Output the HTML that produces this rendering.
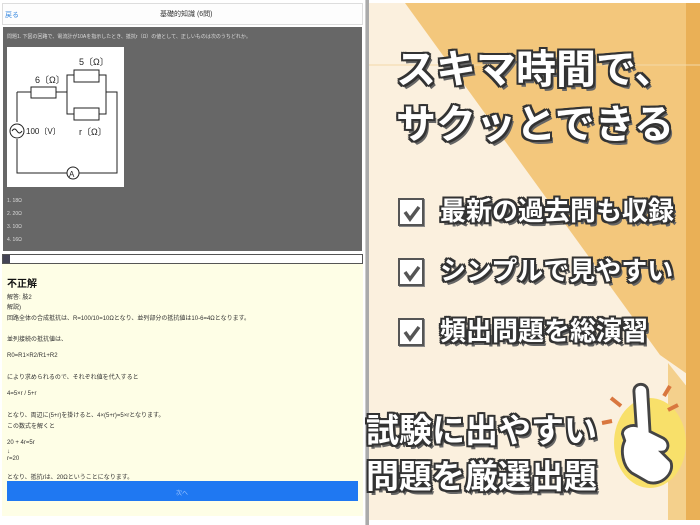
<!DOCTYPE html>
<html><head><meta charset="utf-8"><style>
*{margin:0;padding:0;box-sizing:border-box}
body{width:700px;height:525px;background:#fff;position:relative;overflow:hidden;font-family:"Liberation Sans","Noto Sans CJK JP",sans-serif}
.a{position:absolute}
.st{color:#fff;font-weight:bold;font-family:"Noto Sans CJK JP",sans-serif;white-space:nowrap;
text-shadow:-2px -2px 0 #333,2px -2px 0 #333,-2px 2px 0 #333,2px 2px 0 #333,0 -2px 0 #333,0 2px 0 #333,-2px 0 0 #333,2px 0 0 #333,3px 4px 0 #666}
.cb{position:absolute;width:26px;height:28px;border:2px solid #555;background:#fff;box-shadow:1px 1px 0 #888}
.y{font-size:6px;color:#333;position:absolute;left:7px;white-space:nowrap}
</style></head><body>
<div class="a" style="left:0;top:0;width:366px;height:525px;background:#fff;border-right:1px solid #ccc"></div>
<div class="a" style="left:2px;top:3px;width:361px;height:22px;background:#fdfdfd;border:1px solid #ddd"></div>
<div class="a" style="left:5px;top:10px;font-size:7px;color:#3a8ae0">戻る</div>
<div class="a" style="left:160px;top:9px;font-size:7px;color:#333">基礎的知識 (6問)</div>
<div class="a" style="left:3px;top:27px;width:359px;height:224px;background:#676767"></div>
<div class="a" style="left:7px;top:33px;font-size:5px;color:#ddd;white-space:nowrap">問題1. 下図の回路で、電流計が10Aを指示したとき、抵抗r（Ω）の値として、正しいものは次のうちどれか。</div>
<div class="a" style="left:7px;top:47px;width:117px;height:140px;background:#fff">
<svg width="117" height="140" viewBox="0 0 117 140" fill="none" stroke="#222" stroke-width="1">
<rect x="24" y="40" width="25" height="11"/><rect x="67" y="23" width="25" height="12"/><rect x="67" y="61" width="25" height="12"/>
<path d="M10 45V75M10 92V126H60M72 126H110V45H99V28H92M67 28H60V67H67M92 67H99V45M49 45H60M10 45H24"/>
<circle cx="10" cy="84" r="7"/><path d="M5 84q2.5-4 5 0t5 0"/><circle cx="66" cy="126" r="6"/>
<g fill="#222" stroke="none" font-family="Liberation Sans" font-size="9"><text x="28" y="36">6〔Ω〕</text><text x="72" y="18">5〔Ω〕</text><text x="72" y="88">r〔Ω〕</text><text x="19" y="87" font-size="8">100〔V〕</text><text x="62" y="130" font-size="8">A</text></g>
</svg></div>
<div class="a" style="left:7px;top:195px;font-size:5px;color:#ddd;line-height:13px">1. 18Ω<br>2. 20Ω<br>3. 10Ω<br>4. 16Ω</div>
<div class="a" style="left:2px;top:254px;width:361px;height:10px;background:#fff;border:1px solid #555"></div>
<div class="a" style="left:3px;top:255px;width:7px;height:8px;background:#445"></div>
<div class="a" style="left:2px;top:264px;width:361px;height:252px;background:#fefee6"></div>
<div class="a" style="left:7px;top:275px;font-size:10px;font-weight:bold;color:#111">不正解</div>
<div class="y" style="top:292px">解答: 肢2</div>
<div class="y" style="top:302px">解説)</div>
<div class="y" style="top:313px">回路全体の合成抵抗は、R=100/10=10Ωとなり、並列部分の抵抗値は10-6=4Ωとなります。</div>
<div class="y" style="top:334px">並列接続の抵抗値は、</div>
<div class="y" style="top:353px">R0=R1×R2/R1+R2</div>
<div class="y" style="top:372px">により求められるので、それぞれ値を代入すると</div>
<div class="y" style="top:391px">4=5×r / 5+r</div>
<div class="y" style="top:410px">となり、両辺に(5+r)を掛けると、4×(5+r)=5×rとなります。</div>
<div class="y" style="top:421px">この数式を解くと</div>
<div class="y" style="top:440px">20 + 4r=5r</div>
<div class="y" style="top:449px">↓</div>
<div class="y" style="top:456px">r=20</div>
<div class="y" style="top:472px">となり、抵抗rは、20Ωということになります。</div>
<div class="a" style="left:7px;top:481px;width:351px;height:20px;background:#1f78f2"></div>
<div class="a" style="left:176px;top:488px;font-size:6px;color:#9cc4ff">次へ</div>
<div class="a" style="left:368px;top:3px;width:332px;height:517px;background:#fbf0de;overflow:hidden">
<svg width="332" height="517" class="a" style="left:0;top:0">
<polygon points="37,0 332,0 332,380 292,352" fill="#f3c77c"/>
<polygon points="300,360 332,400 332,517 300,517" fill="#f4d08c"/>
<rect x="318" y="0" width="14" height="517" fill="#eab056"/>
<line x1="0" y1="62" x2="332" y2="62" stroke="#f3d9a8" stroke-width="1"/>
<ellipse cx="282" cy="440" rx="36" ry="45" fill="#f8e06a"/>
<g transform="translate(282,440) scale(1.15) translate(-282,-415)">
<path d="M270 400l-2-30c0-8 12-8 12 0l2 35 12 6c6 4 4 12-2 12l8 8c4 10-8 22-20 18l-14-8c-8-6-10-20-6-28l-2-6c0-6 8-8 12-7z" fill="#fff" stroke="#444" stroke-width="2.5"/>
</g>
<path d="M243 395l10 8M244 418l-10 2M302 383l-6 10M310 402l-10 5" stroke="#d9773f" stroke-width="4"/>
</svg>
<div class="cb" style="left:30px;top:195px"></div>
<div class="cb" style="left:30px;top:255px"></div>
<div class="cb" style="left:30px;top:315px"></div>
<svg class="a" style="left:30px;top:195px" width="30" height="150"><g fill="none" stroke="#555" stroke-width="3.5"><path d="M7 14l5 7 9-12"/><path d="M7 74l5 7 9-12"/><path d="M7 134l5 7 9-12"/></g></svg>
</div>
<div class="a" style="left:366px;top:0;width:3px;height:525px;background:#aaa"></div>
<div class="a st" style="left:396px;top:40px;font-size:40px;line-height:52px">スキマ時間で、</div>
<div class="a st" style="left:396px;top:95px;font-size:40px;line-height:52px">サクッとできる</div>
<div class="a st" style="left:440px;top:194px;font-size:26px;line-height:32px">最新の過去問も収録</div>
<div class="a st" style="left:440px;top:254px;font-size:26px;line-height:32px">シンプルで見やすい</div>
<div class="a st" style="left:440px;top:314px;font-size:26px;line-height:32px">頻出問題を総演習</div>
<div class="a st" style="left:366px;top:406px;font-size:33px;line-height:44px">試験に出やすい</div>
<div class="a st" style="left:366px;top:452px;font-size:33px;line-height:44px">問題を厳選出題</div>
</body></html>
